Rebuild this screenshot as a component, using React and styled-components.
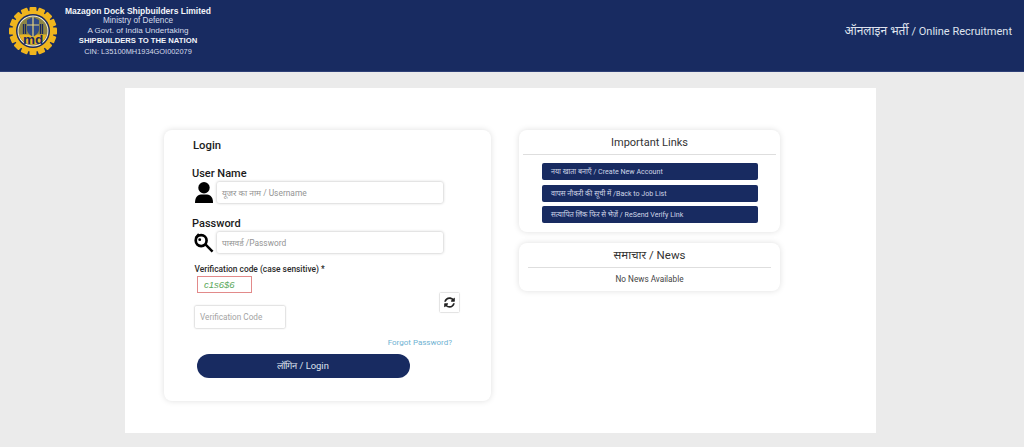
import React from "react";
import styled, { createGlobalStyle } from "styled-components";

const Global = createGlobalStyle`
  html, body { margin: 0; padding: 0; background: #ebebeb; }
  body { font-family: Roboto, "Noto Sans", "Liberation Sans", sans-serif; height: 447px; overflow: hidden; }
  * { box-sizing: border-box; }
`;
const navy = "#182b61";

const Header = styled.header`
  height: 71.5px; background: ${navy}; display: flex; align-items: flex-start; justify-content: space-between;
  border-bottom: 1px solid #2f4077;
`;
const Brand = styled.div`display: flex; padding: 7px 0 0 9px;`;
const BrandText = styled.div`
  width: 160px; margin-left: 1px; margin-top: -2px; padding-top: .5px; display: flex; flex-direction: column; align-items: center;
  font-family: "Liberation Sans", sans-serif; line-height: 10.300px;
`;
const BrandLine = styled.span`
  white-space: nowrap; font-weight: ${p => (p.$bold ? 700 : 400)}; font-size: ${p => p.$size}px; color: ${p => (p.$bold ? "#f2f4f9" : "#d5dbea")};
`;
const HeaderTitle = styled.div`
  margin: 22px 12px 0 0; color: #dfe3ee; font-size: 12px; line-height: 18px; white-space: nowrap;
`;
const HeaderLatin = styled.span`font-size: 11px;`;
const Page = styled.main`
  width: 751px; height: 345px; margin: 16.5px 0 0 125px; background: #fff; display: flex; align-items: flex-start;
  padding: 42px 0 0 39px; gap: 28px;
`;
const Card = styled.section`
  background: #fff; border-radius: 8px; box-shadow: 0 0 6px rgba(0,0,0,.13);
`;
const LoginCard = styled(Card)`width: 327px; height: 271px; padding: 8px 0 0 28px;`;
const LoginTitle = styled.h2`margin: 0 0 0 1px; font-size: 11.300px; line-height: 15px; font-weight: 500; color: #1c1c1c;`;
const FieldLabel = styled.label`display: block; font-size: 11px; line-height: 14px; font-weight: 500; color: #1a1a1a; margin-top: 14px;`;
const FieldRow = styled.div`display: flex; align-items: center; gap: 2px; height: 21px; margin-top: 1px;`;
const IconBox = styled.div`width: 23px; height: 21px; display: flex; align-items: center; justify-content: center;`;
const TextInput = styled.div`
  width: 226px; height: 21px; background: #fff; border-radius: 2px; box-shadow: 0 0 3px rgba(0,0,0,.3);
  padding-left: 5px; color: #949494; font-size: 8.400px; line-height: 22px; white-space: nowrap;
`;
const CodeLabel = styled.div`margin: 11px 0 0 2.500px; font-size: 8.400px; line-height: 11px; font-weight: 500; color: #2a2a2a;`;
const CodeBox = styled.div`
  width: 55px; height: 17px; margin: 1px 0 0 5px; border: 1px solid #e28a8a; padding-left: 6px;
  color: #5aa85a; font: italic 9.500px/15px "Liberation Sans", sans-serif;
`;
const CodeRow = styled.div`display: flex; align-items: flex-start;`;
const CodeInput = styled.div`
  width: 90px; height: 21.500px; margin: 13px 0 0 3px; border-radius: 1px; box-shadow: 0 0 2px rgba(0,0,0,.4);
  padding-left: 5px; color: #a4a4a4; font-size: 8.200px; line-height: 22px;
`;
const RefreshBtn = styled.div`
  width: 19px; height: 19px; margin-left: 155px; background: #fff; box-shadow: 0 0 1.500px rgba(0,0,0,.4);
  display: flex; align-items: center; justify-content: center;
`;
const ForgotRow = styled.div`width: 260px; text-align: right; margin-top: 9.500px; color: #6fb2d2; font-size: 8px; line-height: 11px;`;
const LoginButton = styled.button`
  display: block; width: 213px; height: 24.500px; margin: 5.500px 0 0 4.500px; border: 0; border-radius: 13px; background: ${navy};
  color: #dfe3ee; font: 400 9.400px/24px Roboto, sans-serif; text-align: center; padding: 0;
`;
const Side = styled.div`width: 261px; display: flex; flex-direction: column; gap: 11px;`;
const LinksCard = styled(Card)`height: 102px;`;
const NewsCard = styled(Card)`height: 48px; padding: 0 9px;`;
const CardTitle = styled.h3`
  margin: 0 ${p => p.$inset}px; height: 25px; border-bottom: 1px solid #dedede; font-weight: 400; text-align: center; color: #333;
  font-size: ${p => p.$size}px; line-height: ${p => p.$line}px;
`;
const LinkList = styled.div`display: flex; flex-direction: column; gap: 4.300px; padding: 8px 22px 0 23px;`;
const LinkBtn = styled.a`
  height: 17.300px; border-radius: 2px; background: ${navy}; color: #cfd5e6; font-size: 7.100px; line-height: 18px; padding-left: 9px; white-space: nowrap;
`;
const NewsText = styled.p`margin: 0; text-align: center; font-size: 8.200px; line-height: 23px; color: #444;`;

const Gear = () => (
  <svg width="48" height="48" viewBox="0 0 48 48">
    <g fill="#f0b51e">
      {Array.from({ length: 16 }).map((_, i) => (
        <rect key={i} x="20.5" y="0" width="7" height="8" rx="1" transform={`rotate(${i * 22.5} 24 24)`} />
      ))}
      <circle cx="24" cy="24" r="20.5" />
    </g>
    <circle cx="24" cy="24" r="17" fill="#19285e" />
    <circle cx="24" cy="24" r="15.500" fill="#f3efd8" />
    <circle cx="24" cy="24" r="14.500" fill="#8d8546" />
    <path d="M10.100 27.500H37.900A14.500 14.500 0 0 1 10.100 27.500Z" fill="#e8b322" />
    <path d="M18 13l6-3 6 3v9c0 4-3 6-6 8-3-2-6-4-6-8z" fill="#2f4a86" />
    <path d="M24 10v20M18 18h12" stroke="#e8d27a" strokeWidth="1.200" fill="none" />
    <path d="M14.500 17v10M16.500 17v10M31.500 17v10M33.500 17v10" stroke="#19285e" strokeWidth="1.300" />
    <text x="24" y="37" textAnchor="middle" fontFamily="'Liberation Sans', sans-serif" fontWeight="700" fontSize="13.500" fill="#19285e">md</text>
  </svg>
);
const UserIcon = () => (
  <svg width="20" height="21" viewBox="0 0 20 21">
    <circle cx="10" cy="5.800" r="5.700" fill="#000" />
    <path d="M1 21c0-5.500 2-8 6-8.500h6c4 .5 6 3 6 8.500z" fill="#000" />
  </svg>
);
const KeyIcon = () => (
  <svg width="20" height="20" viewBox="0 0 21 21">
    <path d="M11.500 11.500L19.500 19.500" stroke="#000" strokeWidth="2.600" />
    <circle cx="7.500" cy="8" r="5.700" fill="none" stroke="#000" strokeWidth="2.800" />
    <circle cx="6" cy="7" r="1.500" fill="#000" />
    <path d="M1.500 5L5 1" stroke="#000" strokeWidth="2" />
  </svg>
);
const RefreshIcon = () => (
  <svg width="11" height="11" viewBox="0 0 512 512" fill="#222">
    <path d="M370.700 133.300C339.500 104 298.900 88 255.800 88c-77.500.100-144.300 53.200-162.800 126.900-1.300 5.400-6.100 9.200-11.700 9.200H24.100c-7.500 0-13.200-6.800-11.800-14.200C33.900 94.900 134.800 8 256 8c66.400 0 126.800 26.100 171.300 68.700L463 41c15.100-15.100 41-4.400 41 17V192c0 13.300-10.700 24-24 24H345.900c-21.400 0-32.100-25.900-17-41zM32 296h134.100c21.400 0 32.100 25.900 17 41l-41.800 41.800c31.300 29.300 71.800 45.300 114.900 45.200 77.400-.1 144.300-53.100 162.800-126.800 1.300-5.400 6.100-9.200 11.700-9.200h57.300c7.500 0 13.200 6.800 11.800 14.200C478.100 417.100 377.200 504 256 504c-66.400 0-126.800-26.100-171.300-68.700L49 471c-15.100 15.100-41 4.400-41-17V320c0-13.300 10.700-24 24-24z" />
  </svg>
);

export default function App() {
  return (
    <>
      <Global />
      <Header>
        <Brand>
          <Gear />
          <BrandText>
            <BrandLine $bold $size={8.5}>Mazagon Dock Shipbuilders Limited</BrandLine>
            <BrandLine $size={8.2}>Ministry of Defence</BrandLine>
            <BrandLine $size={8.1}>A Govt. of India Undertaking</BrandLine>
            <BrandLine $bold $size={7.7}>SHIPBUILDERS TO THE NATION</BrandLine>
            <BrandLine $size={7.4}>CIN: L35100MH1934GOI002079</BrandLine>
          </BrandText>
        </Brand>
        <HeaderTitle>ऑनलाइन भर्ती <HeaderLatin>/ Online Recruitment</HeaderLatin></HeaderTitle>
      </Header>
      <Page>
        <LoginCard>
          <LoginTitle>Login</LoginTitle>
          <FieldLabel>User Name</FieldLabel>
          <FieldRow>
            <IconBox><UserIcon /></IconBox>
            <TextInput>यूजर का नाम / Username</TextInput>
          </FieldRow>
          <FieldLabel>Password</FieldLabel>
          <FieldRow>
            <IconBox><KeyIcon /></IconBox>
            <TextInput>पासवर्ड /Password</TextInput>
          </FieldRow>
          <CodeLabel>Verification code (case sensitive) *</CodeLabel>
          <CodeBox>c1s6$6</CodeBox>
          <CodeRow>
            <CodeInput>Verification Code</CodeInput>
            <RefreshBtn><RefreshIcon /></RefreshBtn>
          </CodeRow>
          <ForgotRow>Forgot Password?</ForgotRow>
          <LoginButton>लॉगिन / Login</LoginButton>
        </LoginCard>
        <Side>
          <LinksCard>
            <CardTitle $inset={4} $size={11} $line={25}>Important Links</CardTitle>
            <LinkList>
              <LinkBtn>नया खाता बनाएँ / Create New Account</LinkBtn>
              <LinkBtn>वापस नौकरी की सूची में /Back to Job List</LinkBtn>
              <LinkBtn>सत्यापित लिंक फिर से भेजें / ReSend Verify Link</LinkBtn>
            </LinkList>
          </LinksCard>
          <NewsCard>
            <CardTitle $inset={0} $size={11.5} $line={24}>समाचार / News</CardTitle>
            <NewsText>No News Available</NewsText>
          </NewsCard>
        </Side>
      </Page>
    </>
  );
}
